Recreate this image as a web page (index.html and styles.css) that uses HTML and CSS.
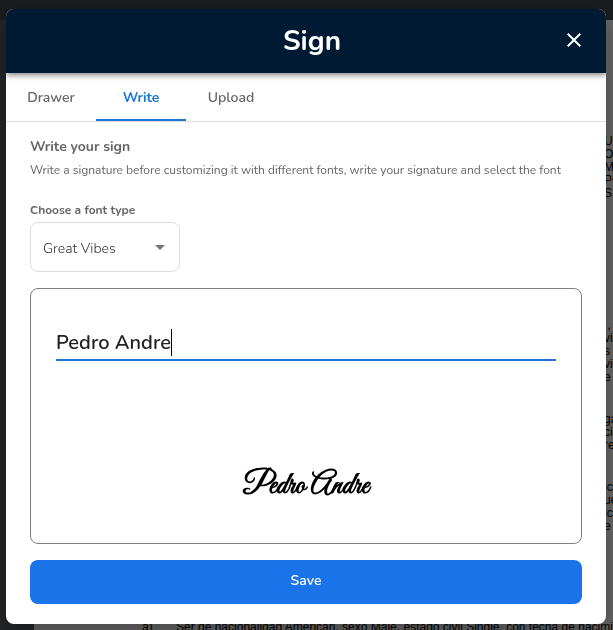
FILE: index.html
```html
<!DOCTYPE html>
<html lang="en">
<head>
<meta charset="utf-8">
<meta name="viewport" content="width=device-width, initial-scale=1">
<title>Sign</title>
<link rel="stylesheet" href="styles.css">
</head>
<body>
<div class="viewer" aria-hidden="true">
  <div class="viewer-bar"></div>
  <div class="sheet">
    <div class="margin-text">
      <p>U<br>O<br>M<br>PO<br>S</p>
      <p class="gap-large">&nbsp;,<br>vic<br>s á<br>vic<br>e</p>
      <p class="gap-small">ga<br>ci<br>re</p>
      <p class="gap-small">ic<br>ue<br>ic<br>e</p>
    </div>
    <div class="clause"><span>a)</span><span>Ser de nacionalidad American, sexo Male, estado civil Single, con fecha de nacimi</span></div>
  </div>
</div>
<div class="overlay">
  <main class="dialog" role="dialog" aria-labelledby="dialog-title">
    <header class="dialog-header">
      <h1 id="dialog-title">Sign</h1>
      <button class="close" type="button" aria-label="Close">
        <svg viewBox="0 0 24 24" width="24" height="24"><path fill="currentColor" d="M19 6.41 17.59 5 12 10.59 6.41 5 5 6.41 10.59 12 5 17.59 6.41 19 12 13.41 17.59 19 19 17.59 13.41 12z"/></svg>
      </button>
    </header>
    <nav class="tabs" role="tablist">
      <button type="button" role="tab" class="tab">Drawer</button>
      <button type="button" role="tab" class="tab active" aria-selected="true">Write</button>
      <button type="button" role="tab" class="tab">Upload</button>
    </nav>
    <form class="content">
      <h2>Write your sign</h2>
      <p class="hint">Write a signature before customizing it with different fonts, write your signature and select the font</p>
      <label class="font-label" for="font">Choose a font type</label>
      <div class="select">
        <select id="font"><option>Great Vibes</option></select>
        <svg class="arrow" viewBox="0 0 24 24" width="24" height="24"><path fill="currentColor" d="m7 10 5 5 5-5z"/></svg>
      </div>
      <section class="pad">
        <div class="field">
          <input type="text" aria-label="Signature" value="Pedro Andre">
          <span class="caret"></span>
        </div>
        <output class="signature">Pedro Andre</output>
      </section>
      <button class="save" type="button">Save</button>
    </form>
  </main>
</div>
</body>
</html>
```
FILE: styles.css
```css
* { box-sizing: border-box; }
html, body { height: 100%; }
body {
  margin: 0;
  overflow: hidden;
  background: #242527;
  color: #666;
  font-family: Nunito, Lato, sans-serif;
}
h1, h2, p { margin: 0; }
button, input, select { font: inherit; }
button { border: 0; background: none; cursor: pointer; }

/* Document behind the dialog */
.viewer { height: 100%; overflow: hidden; }
.viewer-bar { height: 20px; background: #1b1c1e; }
.sheet {
  margin-left: 34px;
  padding-top: 115px;
  background: #666;
  color: #000;
  font: 12px/13px "Liberation Sans", sans-serif;
}
.margin-text { margin-left: auto; width: 9px; white-space: nowrap; }
.gap-large { padding-top: 119px; }
.gap-small { padding-top: 29px; }
.clause {
  display: grid;
  grid-template-columns: 34px 1fr;
  margin: 88px 0 0 108px;
  white-space: nowrap;
}

/* Dialog */
.overlay { position: fixed; inset: 0; padding: 9px 7px 6px 6px; }
.dialog {
  display: flex;
  flex-direction: column;
  min-height: 100%;
  max-width: 600px;
  margin: 0 auto;
  overflow: hidden;
  border-radius: 8px;
  background: #fff;
  box-shadow: 0 8px 24px rgba(0, 0, 0, .3);
}
.dialog-header {
  display: grid;
  grid-template-columns: 24px 1fr 24px;
  align-items: center;
  height: 64px;
  padding: 0 20px 2px;
  background: #001a33;
  color: #fff;
  box-shadow: 0 2px 6px rgba(0, 0, 0, .5);
}
.dialog-header h1 {
  grid-column: 2;
  padding: 2px 0 0 12px;
  text-align: center;
  font-size: 28px;
  font-weight: 700;
  line-height: 40px;
}
.close { display: flex; justify-self: end; padding: 0; color: #fff; }
.tabs { display: flex; border-bottom: 1px solid #ddd; }
.tab {
  width: 90px;
  height: 48px;
  padding: 2px 0 0;
  border-bottom: 2px solid transparent;
  color: #666;
  font-size: 14px;
  font-weight: 600;
}
.tab.active { border-color: #1976d2; color: #1976d2; font-weight: 700; }
.content { display: flex; flex: 1; flex-direction: column; padding: 13px 24px 20px; }
h2 { font-size: 14px; font-weight: 700; line-height: 24px; }
.hint { margin-top: 1px; font-size: 12px; line-height: 20px; }
.font-label { margin-top: 20px; font-size: 12px; font-weight: 700; line-height: 20px; }
.select {
  position: relative;
  width: 150px;
  margin-top: 2px;
}
.select select {
  width: 100%;
  height: 50px;
  padding: 2px 32px 0 12px;
  appearance: none;
  border: 1px solid #ddd;
  border-radius: 8px;
  background: #fff;
  color: #333;
  font-size: 14px;
  font-weight: 300;
}
.arrow { position: absolute; right: 8px; top: 13px; color: #757575; pointer-events: none; }
.pad {
  display: flex;
  flex: 1;
  flex-direction: column;
  margin: 16px 0;
  padding: 34px 25px;
  border: 1px solid #808080;
  border-radius: 8px;
}
.field { position: relative; }
.field input {
  display: block;
  width: 100%;
  height: 38px;
  padding: 2px 0 0;
  border: 0;
  border-bottom: 2px solid #1976d2;
  outline: 0;
  color: #222;
  font-size: 20px;
  font-weight: 600;
}
.caret { position: absolute; left: 115px; top: 6px; width: 1px; height: 27px; background: #000; }
.signature {
  margin: auto auto 0;
  color: #000;
  font: bold 30px/46px "Great Vibes", "Liberation Serif", cursive;
}
.save {
  height: 44px;
  padding: 0 0 4px;
  border-radius: 8px;
  background: #1a73e8;
  color: #fff;
  font-size: 14px;
  font-weight: 600;
}
```
